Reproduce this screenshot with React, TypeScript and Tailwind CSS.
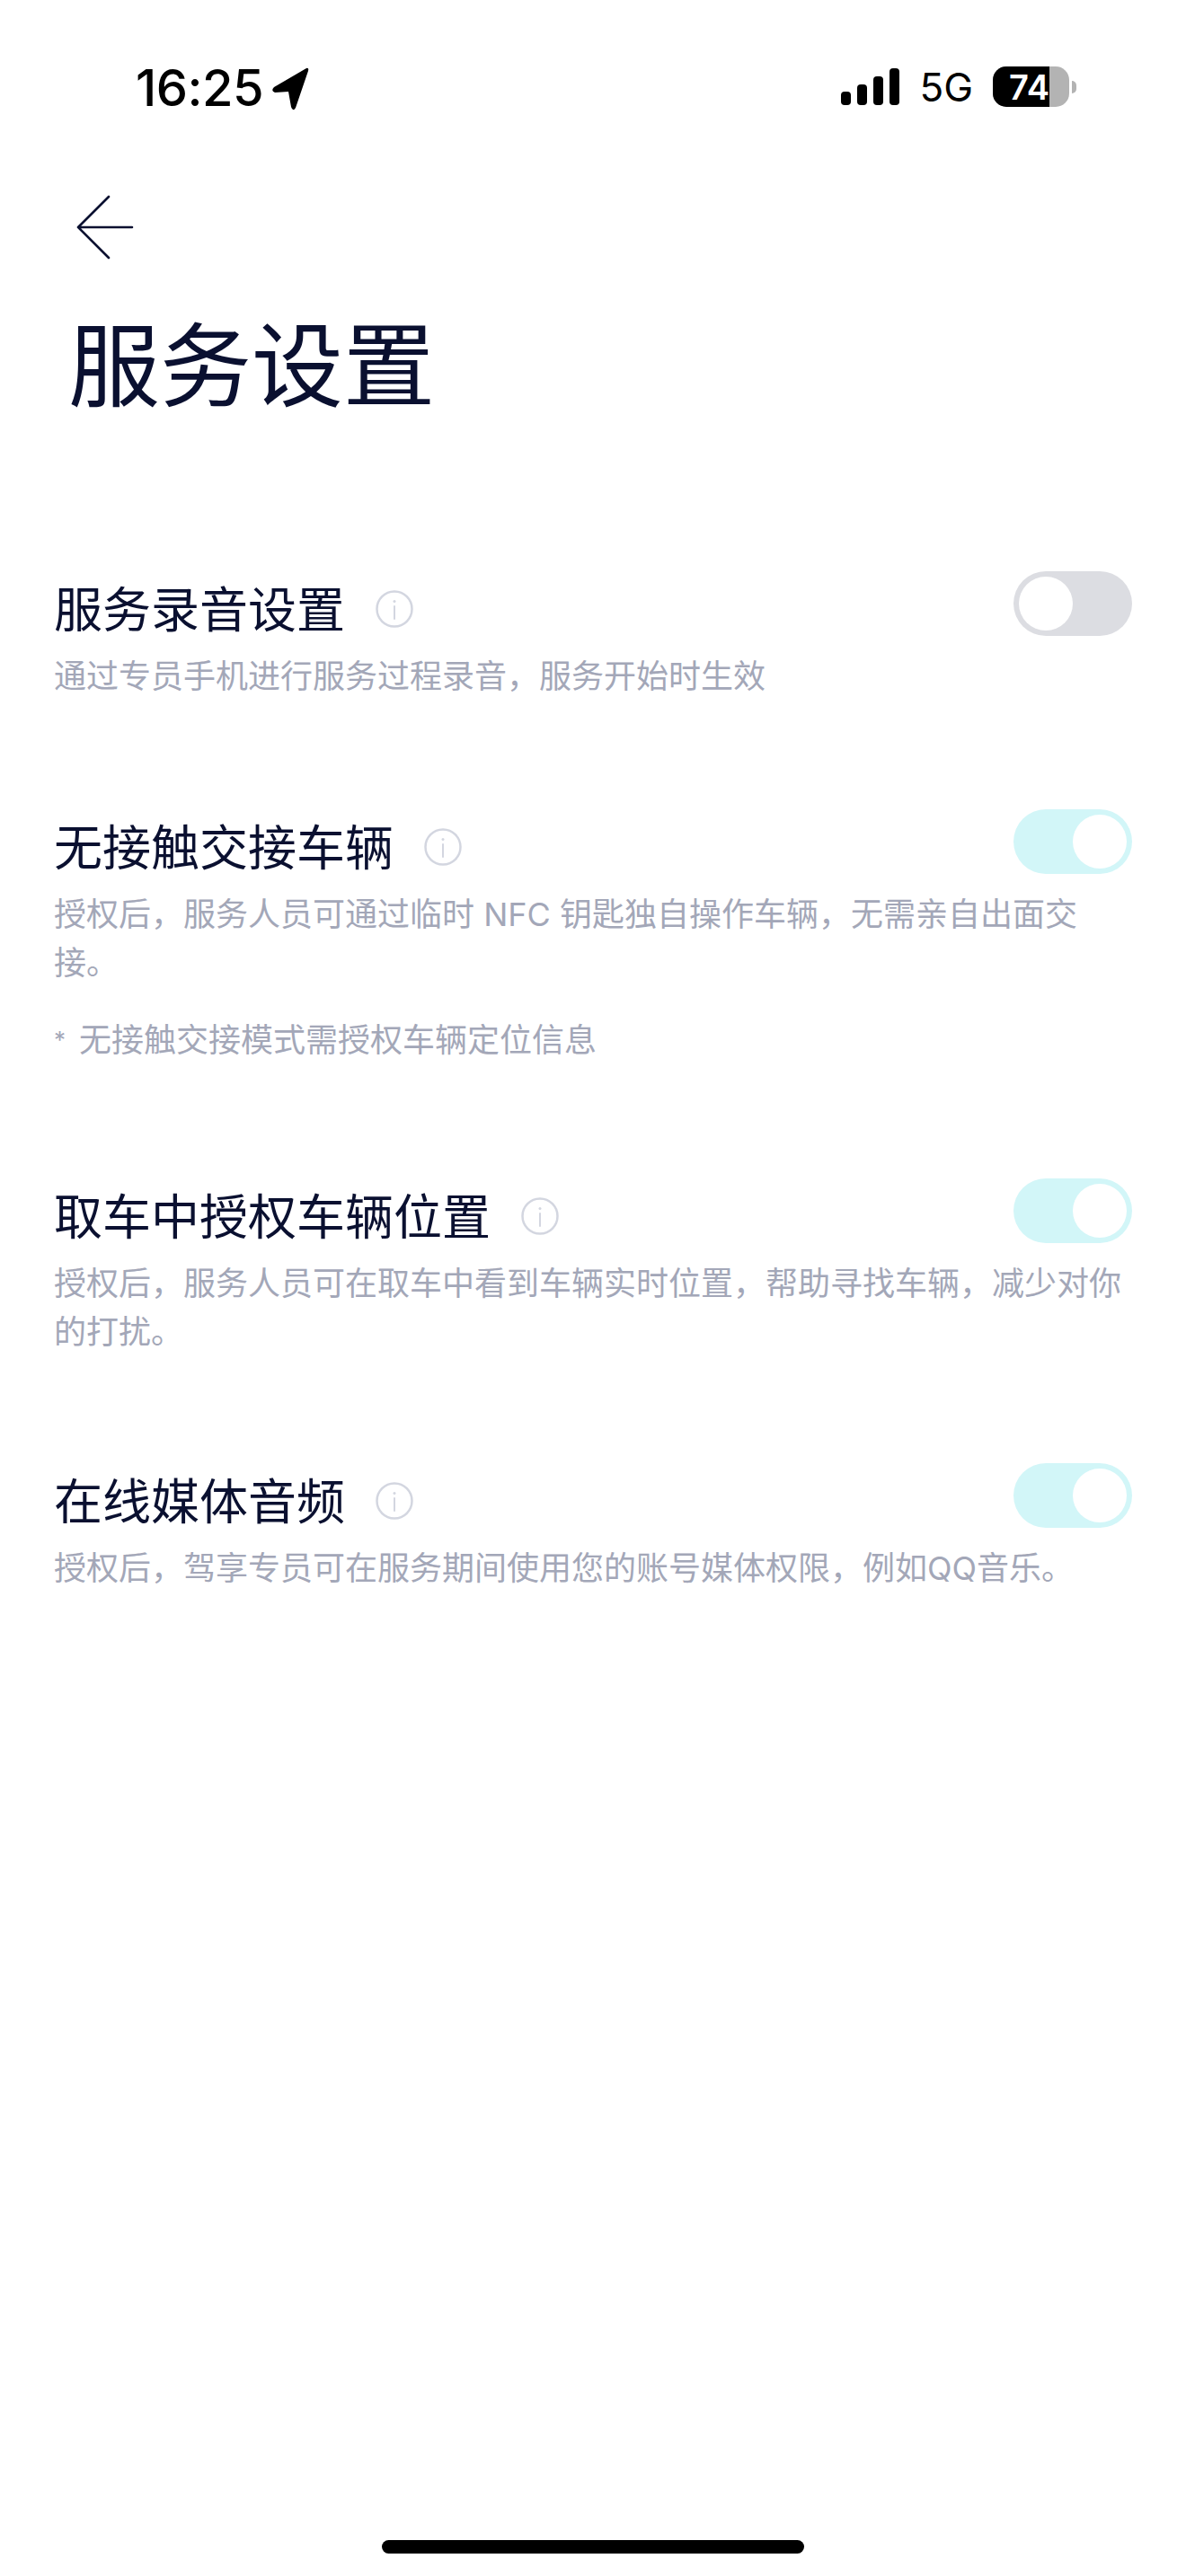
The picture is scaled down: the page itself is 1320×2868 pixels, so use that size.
const CJK = "font-['Inter','Noto_Sans_CJK_SC',sans-serif]";

function Info() {
  return (
    <svg width="42" height="42" viewBox="0 0 42 42" fill="none" className="shrink-0">
      <circle cx="21" cy="21" r="19.5" stroke="#d3d6e0" strokeWidth="2.5" />
      <circle cx="21" cy="12.5" r="1.5" fill="#d3d6e0" />
      <path d="M21 18v14" stroke="#d3d6e0" strokeWidth="2" strokeLinecap="round" />
    </svg>
  );
}

function Toggle({ on }: { on: boolean }) {
  return (
    <div className={`flex h-[72px] w-[132px] shrink-0 rounded-full p-[6px] ${on ? "justify-end bg-[#d2f6f8]" : "justify-start bg-[#dcdde2]"}`}>
      <div className="h-[60px] w-[60px] rounded-full bg-white" />
    </div>
  );
}

function Row({ title, desc, note, on, mt }: { title: string; desc: string; note?: string; on: boolean; mt: string }) {
  return (
    <section className={mt}>
      <div className="flex items-start justify-between">
        <div className="mt-[12px] flex items-center">
          <h2 className="text-[54px] leading-[64px] font-normal text-[#0a1030]">{title}</h2>
          <div className="ml-[34px] -mt-[4px]"><Info /></div>
        </div>
        <Toggle on={on} />
      </div>
      <p className="mt-[14px] text-[36px] leading-[54px] text-[#a3a7b8]">{desc}</p>
      {note && (
        <p className="mt-[33px] flex items-center text-[36px] leading-[52px] text-[#a3a7b8]">
          <span className="w-[28px] text-[26px] leading-[52px]">*</span>
          <span>{note}</span>
        </p>
      )}
    </section>
  );
}

export default function App() {
  return (
    <div lang="zh-CN" className={`flex h-[2868px] w-[1320px] flex-col bg-white ${CJK}`}>
      <div className="flex h-[192px] items-start justify-between pt-[70px] pr-[122px] pl-[151px]">
        <div className="flex items-center gap-[9px] text-[56px] leading-[56px] font-medium tracking-[-0.5px] text-black">
          <span>16:25</span>
          <svg width="42" height="52" viewBox="0 0 42 52">
            <path d="M3 25 L39 4 Q42 3 41 7 L27 48 Q24 53 22 47 L19 30 L4 31 Q-1 29 3 25 Z" fill="#000" />
          </svg>
        </div>
        <div className="mt-[4px] flex items-center">
          <svg width="65" height="41" viewBox="0 0 65 41">
            <rect x="0" y="26" width="11" height="15" rx="4" fill="#000" />
            <rect x="18" y="18" width="11" height="23" rx="4" fill="#000" />
            <rect x="36" y="9" width="11" height="32" rx="4" fill="#000" />
            <rect x="54" y="0" width="11" height="41" rx="4" fill="#000" />
          </svg>
          <span className="ml-[22px] text-[44px] leading-[42px] text-black">5G</span>
          <div className="ml-[22px] flex h-[45px] w-[85px] items-center rounded-[15px] bg-[#b3b3b3]">
            <div className="flex h-full w-[63px] items-center justify-end rounded-l-[15px] bg-black text-[38px] leading-[40px] font-semibold text-white">74</div>
          </div>
          <div className="ml-[3px] h-[14px] w-[5px] rounded-r-full bg-[#b3b3b3]" />
        </div>
      </div>

      <div className="pl-[84px]">
        <svg width="66" height="72" viewBox="0 0 66 72" fill="none" className="mt-[25px]">
          <path d="M37 2 L3 36 L37 70 M3 36 H63" stroke="#0a1030" strokeWidth="2.6" strokeLinecap="round" strokeLinejoin="round" />
        </svg>
      </div>

      <h1 className="mt-[59px] pl-[76px] text-[102px] leading-[120px] font-normal text-[#0a1030]">服务设置</h1>

      <main className="px-[60px]">
        <Row mt="mt-[168px]" title="服务录音设置" desc="通过专员手机进行服务过程录音，服务开始时生效" on={false} />
        <Row mt="mt-[121px]" title="无接触交接车辆" desc="授权后，服务人员可通过临时 NFC 钥匙独自操作车辆，无需亲自出面交接。" note="无接触交接模式需授权车辆定位信息" on />
        <Row mt="mt-[128px]" title="取车中授权车辆位置" desc="授权后，服务人员可在取车中看到车辆实时位置，帮助寻找车辆，减少对你的打扰。" on />
        <Row mt="mt-[119px]" title="在线媒体音频" desc="授权后，驾享专员可在服务期间使用您的账号媒体权限，例如QQ音乐。" on />
      </main>

      <div className="mt-auto mb-[25px] h-[15px] w-[470px] self-center rounded-full bg-black" />
    </div>
  );
}
